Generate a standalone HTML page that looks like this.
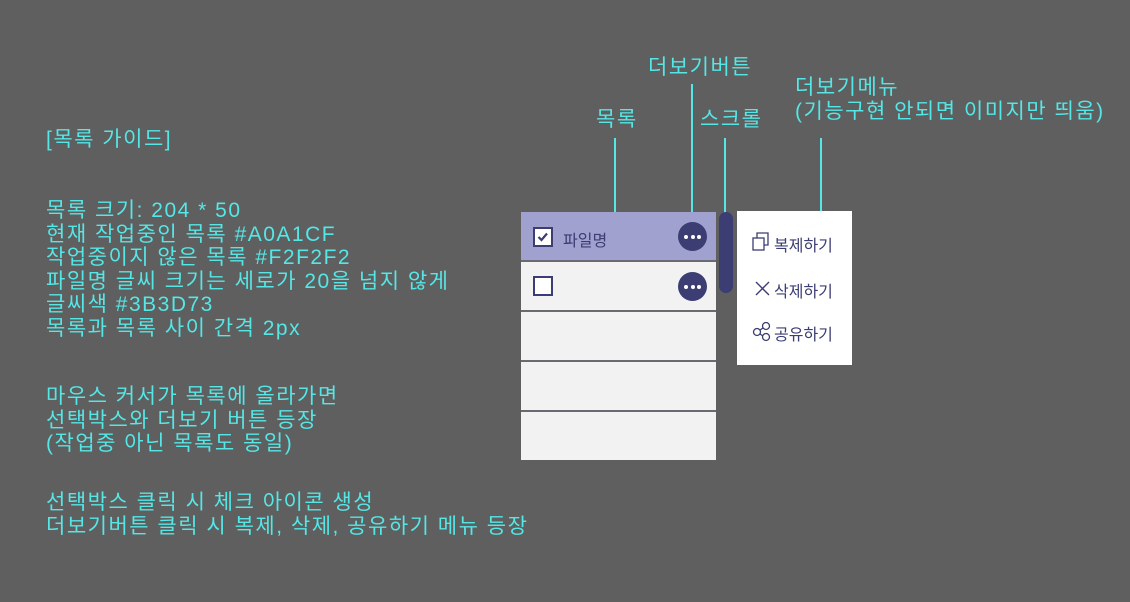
<!DOCTYPE html>
<html><head><meta charset="utf-8"><style>
body{margin:0;width:1130px;height:602px;background:#5f5f5f;position:relative;overflow:hidden;font-family:"Liberation Sans","Noto Sans CJK KR",sans-serif;color:#55e6e6}
.t{position:absolute;font-size:21px;line-height:23.5px;letter-spacing:1.5px;white-space:nowrap}
.v{position:absolute;width:2px;background:#55e6e6}
.row{position:absolute;left:521px;width:195px;background:#f2f2f2}
.ln{position:absolute;left:521px;width:195px;height:2px;background:#6a6a72}
.cb{position:absolute;left:533px;width:20px;height:20px;border:2px solid #3b3d73;box-sizing:border-box;background:#fff}
.more{position:absolute;left:678px;width:29px;height:29px;border-radius:50%;background:#3b3d73}
.more i{position:absolute;top:13px;width:4px;height:4px;border-radius:50%;background:#fff}
.mi{position:absolute;left:752px;font-size:16px;color:#3b3d73;white-space:nowrap}
</style></head><body>
<div class="t" style="left:46px;top:128px">[목록 가이드]</div>
<div class="t" style="left:46px;top:199px">목록 크기: 204 * 50<br>현재 작업중인 목록 #A0A1CF<br>작업중이지 않은 목록 #F2F2F2<br>파일명 글씨 크기는 세로가 20을 넘지 않게<br>글씨색 #3B3D73<br>목록과 목록 사이 간격 2px</div>
<div class="t" style="left:46px;top:385px">마우스 커서가 목록에 올라가면<br>선택박스와 더보기 버튼 등장<br>(작업중 아닌 목록도 동일)</div>
<div class="t" style="left:46px;top:491px">선택박스 클릭 시 체크 아이콘 생성<br>더보기버튼 클릭 시 복제, 삭제, 공유하기 메뉴 등장</div>
<div class="t" style="left:596px;top:108px">목록</div>
<div class="t" style="left:648px;top:56px">더보기버튼</div>
<div class="t" style="left:700px;top:108px">스크롤</div>
<div class="t" style="left:795px;top:76px">더보기메뉴<br>(기능구현 안되면 이미지만 띄움)</div>
<div class="v" style="left:614px;top:138px;height:80px"></div>
<div class="v" style="left:691px;top:84px;height:152px"></div>
<div class="v" style="left:724px;top:138px;height:78px"></div>
<div class="v" style="left:820px;top:138px;height:80px"></div>
<div class="row" style="top:212px;height:49px;background:#a0a1cf"></div>
<div class="ln" style="top:260px"></div>
<div class="row" style="top:262px;height:48px"></div>
<div class="ln" style="top:310px"></div>
<div class="row" style="top:312px;height:48px"></div>
<div class="ln" style="top:360px"></div>
<div class="row" style="top:362px;height:48px"></div>
<div class="ln" style="top:410px"></div>
<div class="row" style="top:412px;height:48px"></div>
<div class="cb" style="top:227px"><svg width="16" height="16" style="position:absolute;left:0;top:0"><path d="M3.5 8 L6.5 11 L12 4.5" stroke="#3b3d73" stroke-width="2.2" fill="none"/></svg></div>
<div style="position:absolute;left:563px;top:227px;font-size:16px;color:#3b3d73">파일명</div>
<div class="more" style="top:222px"><i style="left:6px"></i><i style="left:12.5px"></i><i style="left:19px"></i></div>
<div class="cb" style="top:276px"></div>
<div class="more" style="top:272px"><i style="left:6px"></i><i style="left:12.5px"></i><i style="left:19px"></i></div>
<div style="position:absolute;left:719px;top:212px;width:14px;height:81px;border-radius:7px;background:#3b3d73"></div>
<div style="position:absolute;left:737px;top:211px;width:115px;height:154px;background:#fff"></div>
<svg width="20" height="20" style="position:absolute;left:752px;top:232px"><rect x="1" y="6" width="11" height="12" fill="none" stroke="#3b3d73" stroke-width="1.3"/><path d="M5 6V1H16V13H12" fill="none" stroke="#3b3d73" stroke-width="1.3"/></svg>
<div class="mi" style="left:774px;top:232px">복제하기</div>
<svg width="18" height="18" style="position:absolute;left:754px;top:280px"><path d="M2 2L15 15M15 2L2 15" stroke="#3b3d73" stroke-width="1.4"/></svg>
<div class="mi" style="left:774px;top:278px">삭제하기</div>
<svg width="22" height="22" style="position:absolute;left:752px;top:321px"><circle cx="5" cy="11" r="3.5" fill="none" stroke="#3b3d73" stroke-width="1.3"/><circle cx="14" cy="5" r="3.5" fill="none" stroke="#3b3d73" stroke-width="1.3"/><circle cx="14" cy="16" r="3.5" fill="none" stroke="#3b3d73" stroke-width="1.3"/><path d="M8 9L11 7M8 13L11 15" stroke="#3b3d73" stroke-width="1.3"/></svg>
<div class="mi" style="left:774px;top:321px">공유하기</div>
</body></html>
